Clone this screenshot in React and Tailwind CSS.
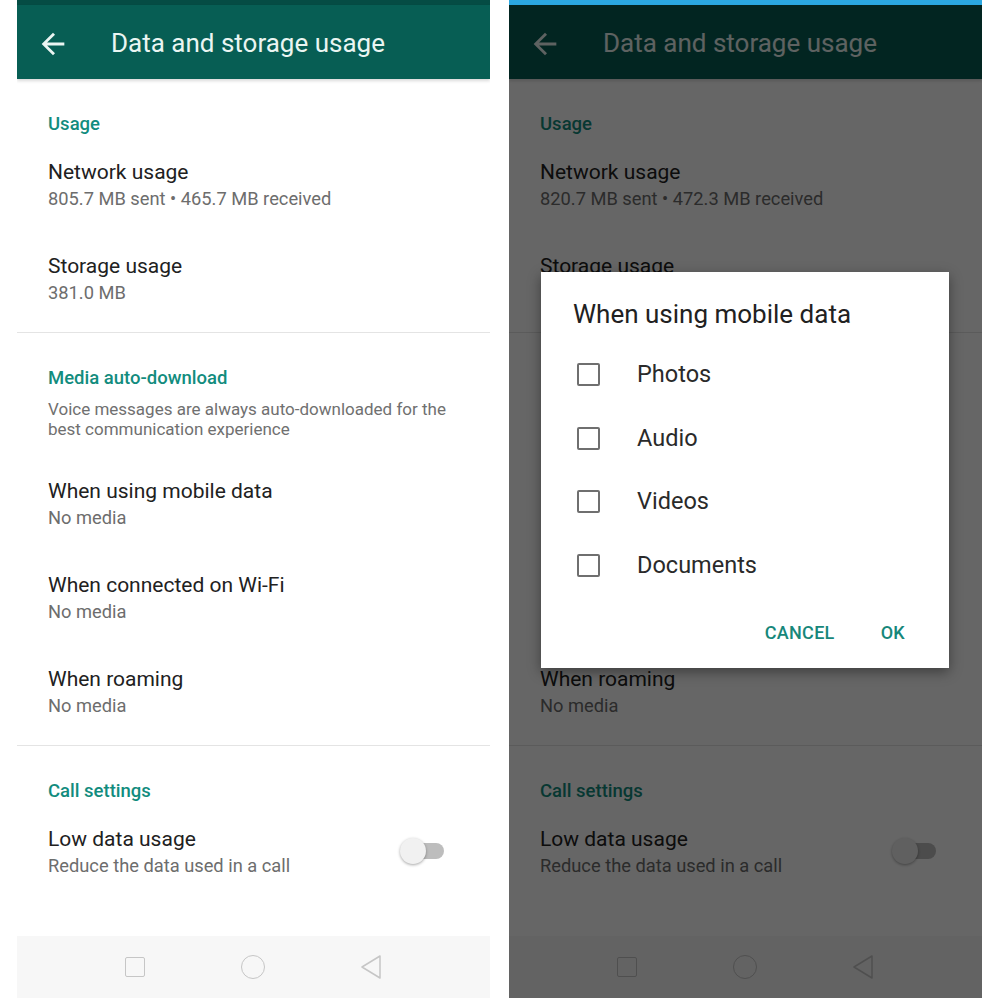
import React from "react";

const font = { fontFamily: "Roboto, 'Noto Sans', Arial, sans-serif" };

function BackArrow({ color }) {
  return (
    <svg width="34" height="34" viewBox="0 0 24 24" fill={color}>
      <path d="M20 11H7.83l5.59-5.59L12 4l-8 8 8 8 1.41-1.41L7.83 13H20v-2z" />
    </svg>
  );
}

function SectionHeader({ children, hidden }) {
  return (
    <div className={"h-[44px] pt-[5px] flex items-center pl-[31px] text-[18.5px] font-medium text-[#128c7e]" + (hidden ? " invisible" : "")}>
      {children}
    </div>
  );
}

function Row({ title, sub, right, hidden, subHidden }) {
  return (
    <div className={"h-[94px] pt-[15px] pl-[31px] pr-[46px] flex items-start justify-between" + (hidden ? " invisible" : "")}>
      <div className="flex flex-col gap-[3px]">
        <div className="h-[26px] leading-[26px] text-[21px] text-[#212121]">{title}</div>
        <div className={"h-[22px] leading-[22px] text-[18.3px] text-[#6d6d6d]" + (subHidden ? " invisible" : "")}>{sub}</div>
      </div>
      {right}
    </div>
  );
}

function Toggle() {
  return (
    <div className="relative w-[44px] h-[26px] mt-[12px]">
      <div className="absolute left-[5px] right-0 top-[5px] h-[16px] rounded-full bg-[#bdbdbd]" />
      <div className="absolute left-0 top-0 w-[26px] h-[26px] rounded-full bg-[#f1f1f1] shadow-[0_1px_3px_rgba(0,0,0,0.35)]" />
    </div>
  );
}

function Phone({ net, storage, dim }) {
  return (
    <div className="relative w-[473px] h-[998px] flex flex-col overflow-hidden" style={font}>
      <div className={dim ? "h-[5px] bg-[#2ba8e2]" : "h-[5px] bg-[#054c44]"} />
      <div className="h-[74px] bg-[#075e54] flex items-center pt-[3px] shadow-[0_2px_3px_rgba(0,0,0,0.15)] relative z-10">
        <div className="ml-[19px] flex items-center">
          <BackArrow color="#eaf5f2" />
        </div>
        <div className="ml-[41px] text-[26px] text-[#eaf5f2]">Data and storage usage</div>
      </div>
      <div className="flex-1 bg-white flex flex-col">
        <div className="h-[21px]" />
        <SectionHeader>Usage</SectionHeader>
        <Row title="Network usage" sub={net} />
        <Row title="Storage usage" sub={storage} subHidden={dim} />
        <div className="h-px bg-[#e4e4e4]" />
        <div className="h-[21px]" />
        <SectionHeader hidden={dim}>Media auto-download</SectionHeader>
        <div className={"pt-px pl-[31px] pr-[20px] text-[17px] leading-[20px] text-[#707070] whitespace-nowrap" + (dim ? " invisible" : "")}>
          <div>Voice messages are always auto-downloaded for the</div>
          <div>best communication experience</div>
        </div>
        <div className="h-[24px]" />
        <Row title="When using mobile data" sub="No media" hidden={dim} />
        <Row title="When connected on Wi-Fi" sub="No media" hidden={dim} />
        <Row title="When roaming" sub="No media" />
        <div className="h-px bg-[#e4e4e4]" />
        <div className="h-[21px]" />
        <SectionHeader>Call settings</SectionHeader>
        <Row title="Low data usage" sub="Reduce the data used in a call" right={<Toggle />} />
      </div>
      <div className="h-[62px] bg-[#f7f7f7] flex items-center">
        <div className="w-[20px] h-[20px] ml-[108px] border-[1.5px] border-[#c6c6c6] rounded-[2px]" />
        <div className="w-[24px] h-[24px] ml-[96px] border-[1.5px] border-[#c6c6c6] rounded-full" />
        <svg className="ml-[95px]" width="22" height="26" viewBox="0 0 22 26">
          <path d="M20 2 L2 13 L20 24 Z" fill="none" stroke="#c6c6c6" strokeWidth="1.5" strokeLinejoin="round" />
        </svg>
      </div>
      {dim && (
        <>
          <div className="absolute left-0 right-0 top-[5px] bottom-0 bg-black/[0.6] z-20" />
          <div className="absolute left-[32px] top-[272px] w-[408px] h-[396px] bg-white z-30 shadow-[0_4px_12px_rgba(0,0,0,0.4)] flex flex-col">
            <div className="pt-[27px] pl-[32px] h-[57px] text-[26px] leading-[30px] text-[#212121] whitespace-nowrap">When using mobile data</div>
            <div className="h-[14px]" />
            {["Photos", "Audio", "Videos", "Documents"].map((t) => (
              <div key={t} className="h-[63.5px] flex items-center">
                <div className="ml-[36px] w-[23px] h-[23px] border-2 border-[#6f6f6f] rounded-[2px]" />
                <div className="ml-[37px] text-[23.5px] text-[#2a2a2a]">{t}</div>
              </div>
            ))}
            <div className="h-[17px]" />
            <div className="h-[36px] flex items-center justify-end pr-[44px] gap-[46px] text-[18px] font-medium text-[#17877a] tracking-[0.3px]">
              <span>CANCEL</span>
              <span>OK</span>
            </div>
          </div>
        </>
      )}
    </div>
  );
}

export default function App() {
  return (
    <div className="w-[1000px] h-[1000px] bg-white flex gap-[19px] pl-[17px]">
      <Phone net="805.7 MB sent • 465.7 MB received" storage="381.0 MB" />
      <Phone net="820.7 MB sent • 472.3 MB received" storage="381.0 MB" dim />
    </div>
  );
}
